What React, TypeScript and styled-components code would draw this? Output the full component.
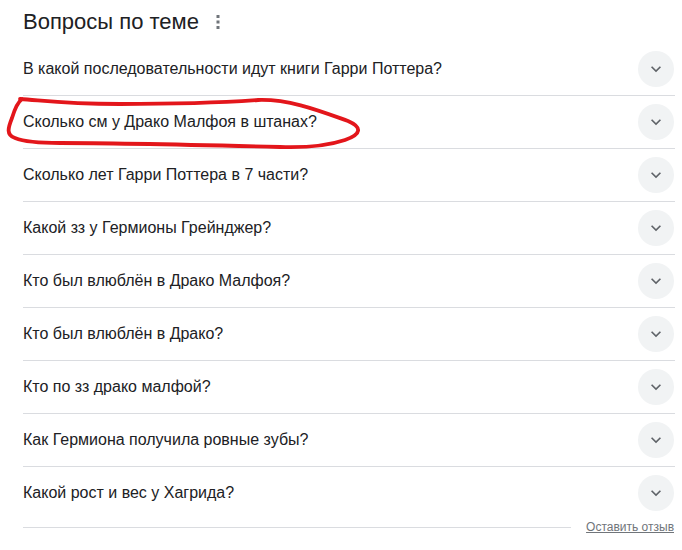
import React from "react";
import styled, { createGlobalStyle } from "styled-components";

const Global = createGlobalStyle`
  html, body { margin: 0; padding: 0; background: #fff; }
  body { font-family: "Liberation Sans", Arial, sans-serif; }
`;

const Page = styled.div`
  position: relative;
  width: 682px;
  height: 550px;
  box-sizing: border-box;
  padding: 0 7px 0 23px;
  background: #fff;
`;

const Header = styled.div`
  height: 43px;
  display: flex;
  align-items: center;
  gap: 14px;
`;

const Title = styled.h2`
  margin: 0;
  font-size: 22px;
  font-weight: 400;
  color: #202124;
  line-height: 28px;
`;

const MenuButton = styled.div`
  width: 10px;
  height: 18px;
  display: flex;
  align-items: center;
  justify-content: center;
  margin-top: 1px;
`;

const List = styled.div`
  display: flex;
  flex-direction: column;
`;

const Row = styled.div<{ $last?: boolean }>`
  height: 52px;
  display: flex;
  align-items: center;
  justify-content: space-between;
  border-bottom: ${(p) => (p.$last ? "none" : "1px solid #dadce0")};
`;

const Question = styled.span`
  font-size: 16px;
  line-height: 24px;
  color: #202124;
`;

const Toggle = styled.div`
  width: 36px;
  height: 36px;
  border-radius: 50%;
  background: #f1f3f4;
  display: flex;
  align-items: center;
  justify-content: center;
  flex-shrink: 0;
  margin-right: 1px;
`;

const Footer = styled.div`
  height: 16px;
  display: flex;
  align-items: center;
  gap: 15px;
`;

const FooterLine = styled.div`
  flex: 1;
  height: 1px;
  background: #dadce0;
`;

const FeedbackLink = styled.a`
  font-size: 12px;
  line-height: 16px;
  color: #70757a;
  text-decoration: underline;
  cursor: pointer;
  margin-right: 1px;
`;

const Scribble = styled.svg`
  position: absolute;
  left: 0;
  top: 0;
  pointer-events: none;
`;

const questions = [
  "В какой последовательности идут книги Гарри Поттера?",
  "Сколько см у Драко Малфоя в штанах?",
  "Сколько лет Гарри Поттера в 7 части?",
  "Какой зз у Гермионы Грейнджер?",
  "Кто был влюблён в Драко Малфоя?",
  "Кто был влюблён в Драко?",
  "Кто по зз драко малфой?",
  "Как Гермиона получила ровные зубы?",
  "Какой рост и вес у Хагрида?",
];

const Chevron = () => (
  <svg width="20" height="20" viewBox="0 0 24 24" fill="#5f6368">
    <path d="M16.59 8.59L12 13.17 7.41 8.59 6 10l6 6 6-6z" />
  </svg>
);

const Dots = () => (
  <svg width="4" height="16" viewBox="0 0 4 16" fill="#70757a">
    <rect x="0.5" y="1" width="3" height="3" />
    <rect x="0.5" y="6.5" width="3" height="3" />
    <rect x="0.5" y="12" width="3" height="3" />
  </svg>
);

export default function App() {
  return (
    <>
      <Global />
      <Page>
        <Header>
          <Title>Вопросы по теме</Title>
          <MenuButton>
            <Dots />
          </MenuButton>
        </Header>
        <List>
          {questions.map((q, i) => (
            <Row key={i} $last={i === questions.length - 1}>
              <Question>{q}</Question>
              <Toggle>
                <Chevron />
              </Toggle>
            </Row>
          ))}
        </List>
        <Footer>
          <FooterLine />
          <FeedbackLink>Оставить отзыв</FeedbackLink>
        </Footer>
        <Scribble width="682" height="550" viewBox="0 0 682 550">
          <path
            d="M 20 99 C 40 100, 60 104, 120 104 C 180 104, 230 102, 258 100 C 290 99, 320 111, 348 121 C 362 127, 362 134, 345 140 C 330 145, 310 148, 280 147 C 200 145, 120 143, 60 143 C 40 143, 25 142, 15 138 C 6 135, 8 128, 12 118 C 15 108, 18 102, 22 99"
            fill="none"
            stroke="#e3161b"
            strokeWidth="3.8"
            strokeLinecap="round"
            strokeLinejoin="round"
          />
        </Scribble>
      </Page>
    </>
  );
}
